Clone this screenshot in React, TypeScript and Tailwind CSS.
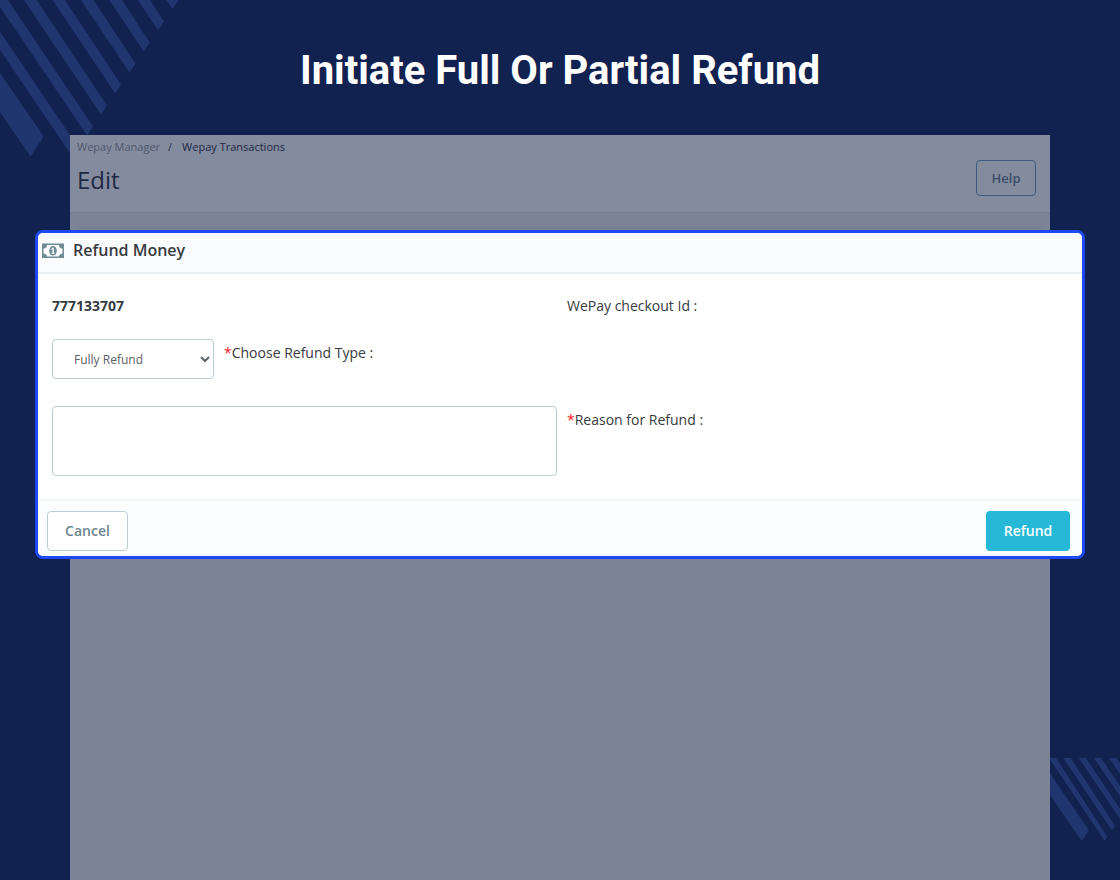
import React from 'react'

const TopStripes = () => (
    <svg className="absolute top-0 left-0" width="180" height="158" viewBox="0 0 180 158" fill="#21366f" aria-hidden="true">
        <path d="M0 73L43.7 136.5L30.5 156.5L0 112Z" />
        <path d="M0 31.5L80 150V168L0 50Z" />
        <path d="M-4.5 0H8L93 126.5L87 135.5Z" />
        <path d="M24 0H36.5L107 105.5L101 114.5Z" />
        <path d="M52.5 0H65L121 84.5L115.3 93.5Z" />
        <path d="M81 0H93.5L135.5 63.5L129.5 72.5Z" />
        <path d="M109.3 0H122L149.7 42.5L143.7 51.5Z" />
        <path d="M137.7 0H150L164 21.5L158 30.5Z" />
        <path d="M166 0H178.7L172.3 9Z" />
    </svg>
)

const BottomStripes = () => (
    <svg className="absolute right-0 bottom-[38px]" width="70" height="84" viewBox="0 0 70 84" fill="#21366f" aria-hidden="true">
        <path d="M0 15.5L39 72.5L31.7 83L0 37Z" />
        <path d="M-1 0H6L57.3 78.7L54.7 83L0 1.5Z" />
        <path d="M13.3 0H20.7L65 67.7L62 72.5Z" />
        <path d="M28.7 0H36L70 51V60.7Z" />
        <path d="M44 0H51L70 28V38.3Z" />
        <path d="M59 0H66.3L70 5.5V16Z" />
    </svg>
)

const MoneyIcon = () => (
    <svg className="shrink-0" width="22" height="16" viewBox="0 0 22 16" aria-hidden="true">
        <path fill="#6f8c94" fillRule="evenodd" d="M0 0.5H22V15H0ZM5 2A3.5 3.5 0 0 1 1.5 5.5V10.5A3.5 3.5 0 0 1 5 13.5H17A3.5 3.5 0 0 1 20.5 10.5V5.5A3.5 3.5 0 0 1 17 2Z" />
        <ellipse cx="11" cy="7.8" rx="3.8" ry="4.8" fill="#6f8c94" />
        <path fill="#fafbfd" d="M10.4 4.8H11.8V9.8H12.8V10.8H9.4V9.8H10.4V6.5L9.4 7V5.8Z" />
    </svg>
)

const RefundModal = () => {
    return (
        <form className="relative -mx-[35px] overflow-hidden rounded-lg border-3 border-[#1f48f5] bg-white text-[#363a41]">
            <div className="flex h-[41px] items-center gap-[9px] border-b-2 border-[#e8eff0] bg-[#fafbfd] px-1 pb-1">
                <MoneyIcon />
                <h2 className="pb-px text-base font-semibold">Refund Money</h2>
            </div>

            <div className="pt-[22px] pr-[10px] pb-[23px] pl-[14px] text-sm">
                <div className="grid grid-cols-2 gap-[10px]">
                    <div className="font-bold">777133707</div>
                    <div>WePay checkout Id :</div>
                </div>

                <div className="mt-[23px] flex gap-[10px]">
                    <select id="refundType" className="h-10 w-[162px] rounded border border-[#bbcdd2] bg-white pl-[17px] text-xs text-[#5c6066]">
                        <option>Fully Refund</option>
                        <option>Partial Refund</option>
                    </select>
                    <label htmlFor="refundType" className="pt-1"><span className="text-[#ff2020]">*</span>Choose Refund Type :</label>
                </div>

                <div className="mt-[27px] grid grid-cols-2 gap-[10px]">
                    <textarea id="reason" className="block h-[70px] w-full resize-none rounded border border-[#bbcdd2] bg-white p-2" />
                    <label htmlFor="reason" className="pt-1"><span className="text-[#ff2020]">*</span>Reason for Refund :</label>
                </div>
            </div>

            <div className="flex items-center justify-between border-t-2 border-[#f4f5f6] bg-[#fcfdfe] pt-[10px] pr-3 pb-[5px] pl-[9px]">
                <button type="button" className="h-10 w-[81px] rounded border border-[#bbcdd2] bg-white text-sm font-semibold text-[#6c868e]">Cancel</button>
                <button type="button" className="h-10 w-[84px] rounded bg-[#25b9d7] text-sm font-semibold text-white">Refund</button>
            </div>
        </form>
    )
}

const App = () => {
    return (
        <div className="relative flex min-h-screen flex-col overflow-hidden bg-[#112150] font-['Open_Sans',sans-serif]">
            <TopStripes />
            <BottomStripes />

            <h1 className="relative pt-[47px] text-center font-[Roboto,sans-serif] text-[40px] leading-12 font-bold text-white">
                Initiate Full Or Partial Refund
            </h1>

            <main className="relative mx-[70px] mt-10 flex-1 bg-[#7b8397]">
                <header className="flex h-[78px] items-start justify-between border-b border-[#767e91] bg-[#838b9e] pr-[14px] pl-[7px]">
                    <div>
                        <nav className="flex gap-2 pt-1 text-[11px] leading-4">
                            <a href="#" className="text-[#4e586e]">Wepay Manager</a>
                            <span className="pr-[2px] text-[#2b3653]">/</span>
                            <a href="#" className="text-[#1c2745]">Wepay Transactions</a>
                        </nav>
                        <h2 className="mt-[9px] text-2xl text-[#1f2945]">Edit</h2>
                    </div>
                    <button type="button" className="mt-[25px] h-9 w-[60px] rounded border border-[#40597a] pt-px text-[13px] font-semibold text-[#3c4d6b]">Help</button>
                </header>
                <div className="mx-[7px] mt-[14px] h-[3px] rounded-t border-t border-[#757d91]" />
                <RefundModal />
            </main>
        </div>
    )
}

export default App
